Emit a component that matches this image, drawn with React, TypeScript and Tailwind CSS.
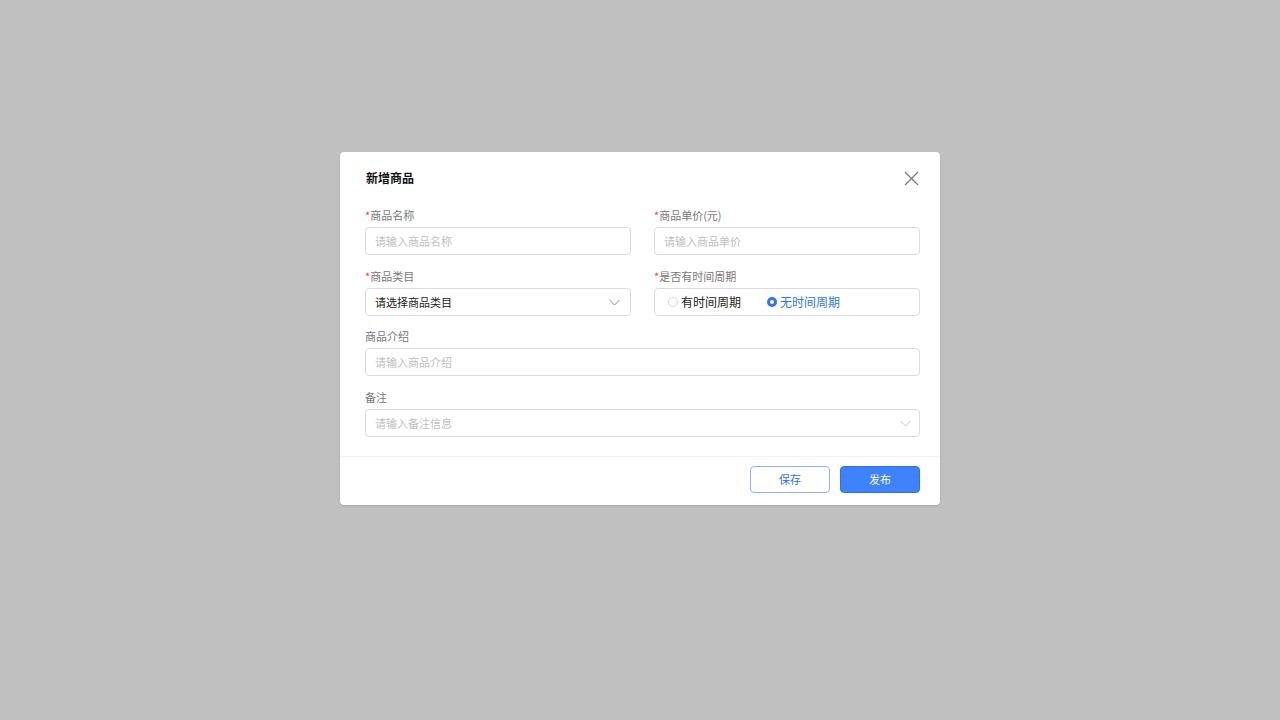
import React, { useState } from 'react'

const font = { fontFamily: '"Noto Sans CJK SC", "Noto Sans", sans-serif' }

const Chevron = ({ light }: { light?: boolean }) => (
  <svg width="11" height="7" viewBox="0 0 11 7" fill="none" className="shrink-0">
    <path d="M0.5 1 5.5 6 10.5 1" stroke={light ? '#c4c4c4' : '#8a8a8a'} strokeWidth="1" />
  </svg>
)

const Label = ({ text, required }: { text: string; required?: boolean }) => (
  <div className="h-[18px] mb-[3px] text-[11px] leading-[18px] text-[#777]">
    {required && <span className="text-[#f04040]">*</span>}
    {text}
  </div>
)

const Input = ({ placeholder }: { placeholder: string }) => (
  <input
    placeholder={placeholder}
    className="w-full h-[28px] px-[9px] text-[11px] border border-[#dcdcdc] rounded-[4px] outline-none placeholder:text-[#c0c0c0] text-[#333]"
    style={font}
  />
)

const Radio = ({ checked, text, onClick }: { checked: boolean; text: string; onClick: () => void }) => (
  <button type="button" onClick={onClick} className="flex items-center gap-[3px]">
    {checked ? (
      <span className="w-[10px] h-[10px] rounded-full bg-[#2e74f5] flex items-center justify-center">
        <span className="w-[4px] h-[4px] rounded-full bg-white" />
      </span>
    ) : (
      <span className="w-[10px] h-[10px] rounded-full border border-[#dadada] bg-white" />
    )}
    <span className={`text-[12px] leading-[18px] ${checked ? 'text-[#2e74f5]' : 'text-[#222]'}`}>{text}</span>
  </button>
)

const App = () => {
  const [period, setPeriod] = useState('none')

  return (
    <div className="w-[1280px] h-[720px] bg-[#c0c0c0] flex justify-center pt-[152px]" style={font}>
      <div className="w-[600px] h-[353px] bg-white rounded-[4px] shadow-[0_1px_2px_rgba(0,0,0,0.15)] flex flex-col">
        {/* header */}
        <div className="flex items-center justify-between pl-[26px] pr-[21px] pt-[15px] h-[37px]">
          <h2 className="text-[12px] font-bold text-[#111] leading-[22px]">新增商品</h2>
          <button type="button" className="w-[16px] h-[16px] flex items-center justify-center">
            <svg width="15" height="15" viewBox="0 0 15 15" fill="none">
              <path d="M1 1 14 14M14 1 1 14" stroke="#777" strokeWidth="1.2" />
            </svg>
          </button>
        </div>

        {/* form */}
        <div className="pl-[25px] pr-[20px] pt-[17px] pb-[19px] flex flex-col">
          <div className="grid grid-cols-2 gap-x-[23px]">
            <div>
              <Label text="商品名称" required />
              <Input placeholder="请输入商品名称" />
            </div>
            <div>
              <Label text="商品单价(元)" required />
              <Input placeholder="请输入商品单价" />
            </div>
          </div>

          <div className="grid grid-cols-2 gap-x-[23px] mt-[12px]">
            <div>
              <Label text="商品类目" required />
              <div className="h-[28px] pl-[9px] pr-[10px] flex items-center justify-between border border-[#dcdcdc] rounded-[4px]">
                <span className="text-[11px] text-[#222]">请选择商品类目</span>
                <Chevron />
              </div>
            </div>
            <div>
              <Label text="是否有时间周期" required />
              <div className="h-[28px] pl-[13px] flex items-center gap-[26px] border border-[#dcdcdc] rounded-[4px]">
                <Radio checked={period === 'has'} text="有时间周期" onClick={() => setPeriod('has')} />
                <Radio checked={period === 'none'} text="无时间周期" onClick={() => setPeriod('none')} />
              </div>
            </div>
          </div>

          <div className="mt-[11px]">
            <Label text="商品介绍" />
            <Input placeholder="请输入商品介绍" />
          </div>

          <div className="mt-[12px]">
            <Label text="备注" />
            <div className="h-[28px] pl-[9px] pr-[8px] flex items-center justify-between border border-[#dcdcdc] rounded-[4px]">
              <span className="text-[11px] text-[#c0c0c0]">请输入备注信息</span>
              <Chevron light />
            </div>
          </div>
        </div>

        {/* footer */}
        <div className="border-t border-[#f2f2f2] flex justify-end gap-[10px] pr-[20px] pt-[9px]">
          <button type="button" className="w-[80px] h-[27px] rounded-[4px] border border-[#8cb4ff] text-[#2e6ef0] text-[11px] bg-white">
            保存
          </button>
          <button type="button" className="w-[80px] h-[27px] rounded-[4px] border border-[#2f6ff0] bg-[#4082fb] text-white text-[11px]">
            发布
          </button>
        </div>
      </div>
    </div>
  )
}

export default App
